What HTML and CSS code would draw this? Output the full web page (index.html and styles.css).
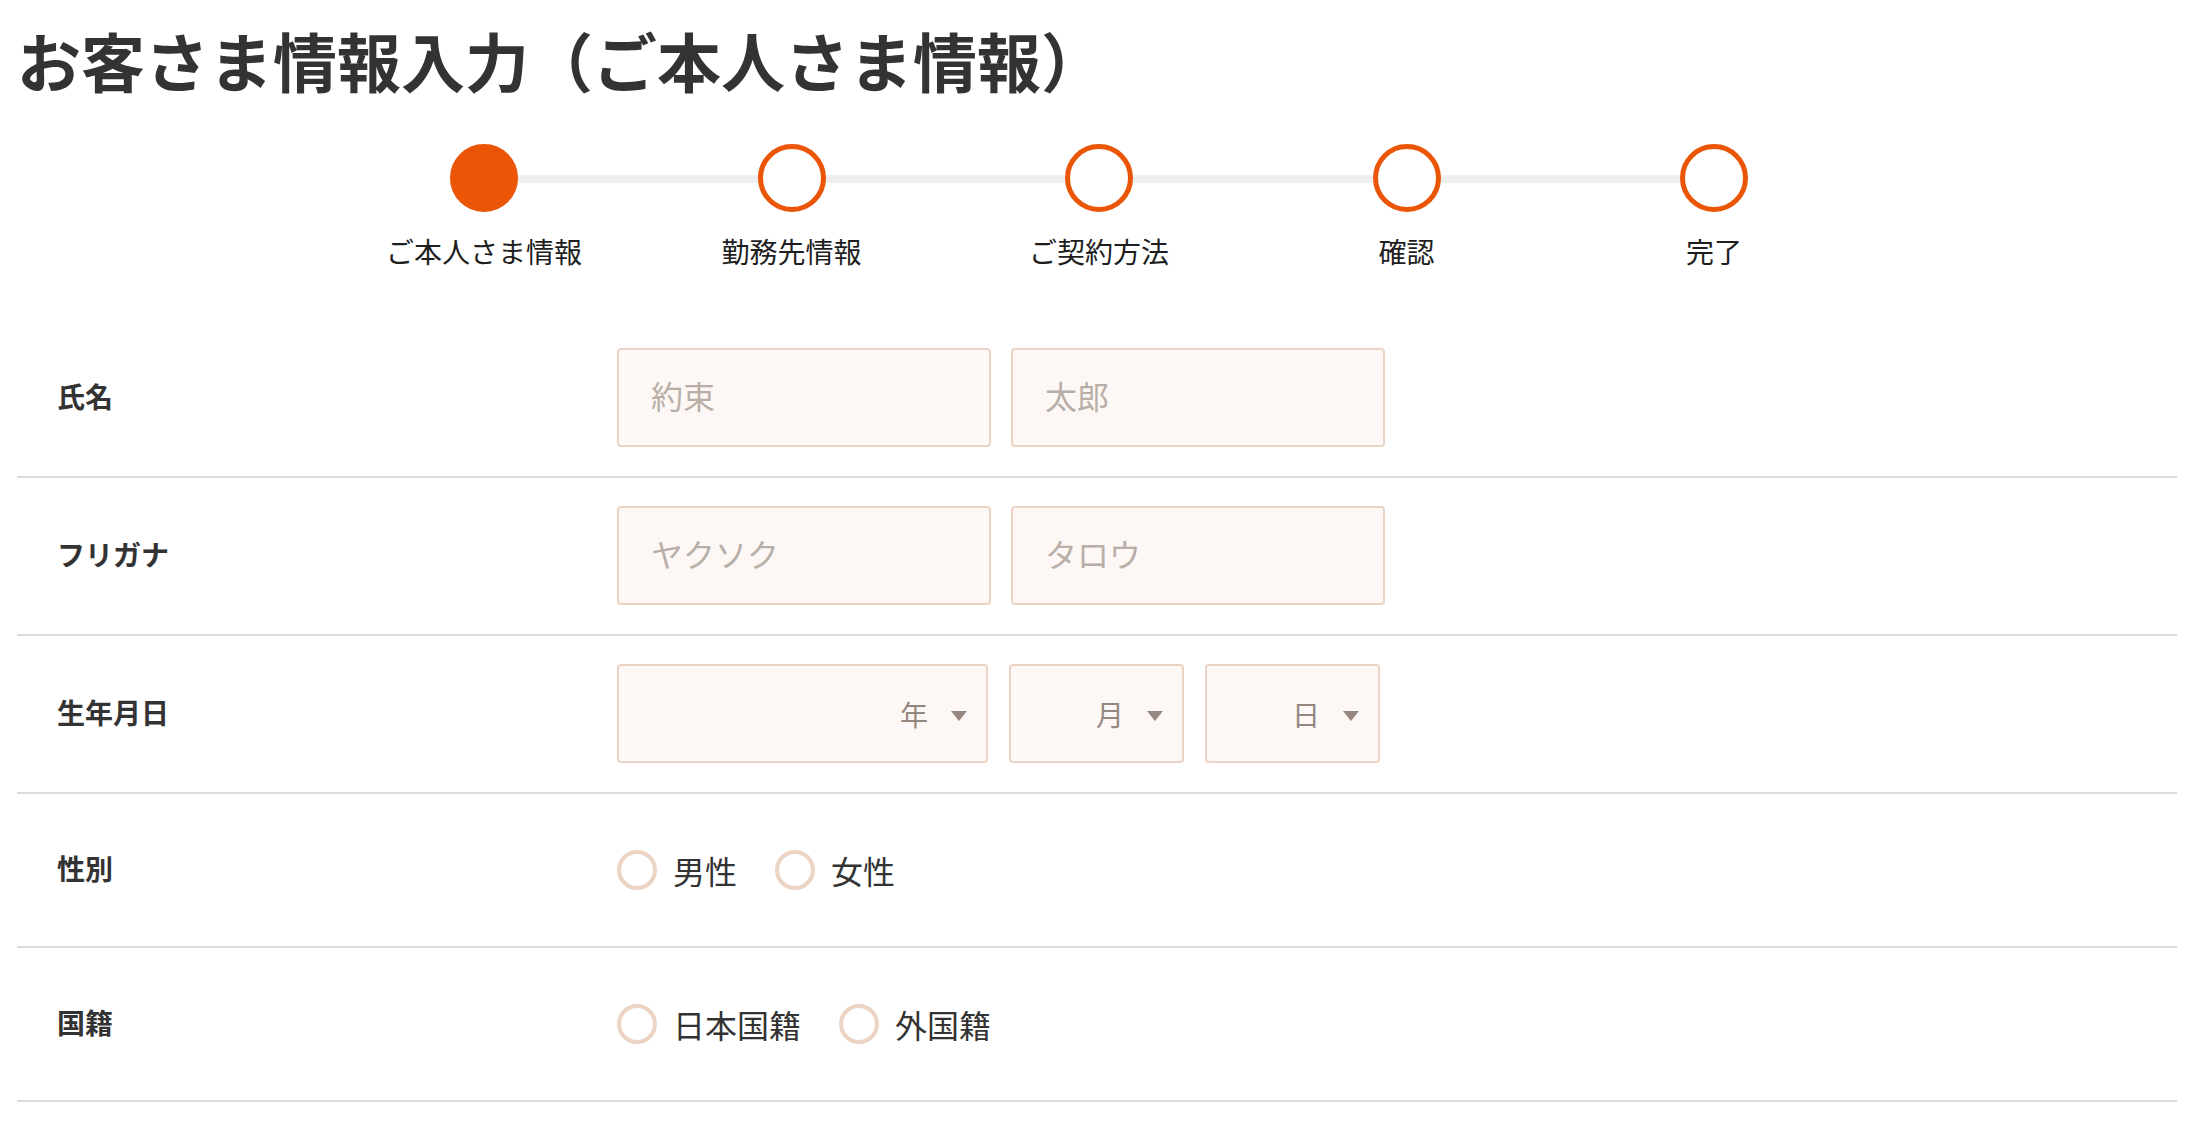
FILE: index.html
```html
<!DOCTYPE html>
<html lang="ja">
<head>
  <meta charset="UTF-8" />
  <meta name="viewport" content="width=device-width, initial-scale=1.0" />
  <title>お客さま情報入力（ご本人さま情報）</title>
  <link rel="stylesheet" href="styles.css">
</head>
<body>
  <h1 class="page-title">お客さま情報入力（ご本人さま情報）</h1>

  <ol class="steps">
    <li class="step is-current"><span class="step-dot"></span><span class="step-label">ご本人さま情報</span></li>
    <li class="step"><span class="step-dot"></span><span class="step-label">勤務先情報</span></li>
    <li class="step"><span class="step-dot"></span><span class="step-label">ご契約方法</span></li>
    <li class="step"><span class="step-dot"></span><span class="step-label">確認</span></li>
    <li class="step"><span class="step-dot"></span><span class="step-label">完了</span></li>
  </ol>

  <form class="entry-form">
    <div class="form-row">
      <div class="row-label">氏名</div>
      <div class="row-field">
        <input type="text" class="text-input" name="last_name" placeholder="約束">
        <input type="text" class="text-input" name="first_name" placeholder="太郎">
      </div>
    </div>

    <div class="form-row">
      <div class="row-label">フリガナ</div>
      <div class="row-field">
        <input type="text" class="text-input" name="last_kana" placeholder="ヤクソク">
        <input type="text" class="text-input" name="first_kana" placeholder="タロウ">
      </div>
    </div>

    <div class="form-row">
      <div class="row-label">生年月日</div>
      <div class="row-field">
        <div class="select-box select-year">
          <select name="birth_year"><option value="">年</option></select>
        </div>
        <div class="select-box select-small">
          <select name="birth_month"><option value="">月</option></select>
        </div>
        <div class="select-box select-small">
          <select name="birth_day"><option value="">日</option></select>
        </div>
      </div>
    </div>

    <div class="form-row">
      <div class="row-label">性別</div>
      <div class="row-field radio-field">
        <label class="radio"><input type="radio" name="gender" value="male"><span>男性</span></label>
        <label class="radio"><input type="radio" name="gender" value="female"><span>女性</span></label>
      </div>
    </div>

    <div class="form-row">
      <div class="row-label">国籍</div>
      <div class="row-field radio-field">
        <label class="radio"><input type="radio" name="nationality" value="jp"><span>日本国籍</span></label>
        <label class="radio"><input type="radio" name="nationality" value="other"><span>外国籍</span></label>
      </div>
    </div>
  </form>
</body>
</html>
```

FILE: styles.css
```css
body {
  margin: 0;
  padding: 0 15px 0 17px;
  font-family: "Noto Sans CJK JP", "Noto Sans", sans-serif;
  color: #333;
  background: #fff;
}
.page-title {
  margin: 11px 0 0;
  font-size: 64px;
  line-height: 96px;
  font-weight: bold;
  color: #333;
}

/* stepper */
.steps {
  display: grid;
  grid-template-columns: repeat(5, 307.5px);
  justify-content: center;
  margin: 37px 0 0;
  padding: 0 0 0 4px;
  list-style: none;
}
.step {
  position: relative;
  display: flex;
  flex-direction: column;
  align-items: center;
}
.step + .step::before {
  content: "";
  position: absolute;
  top: 31px;
  left: -50%;
  width: 100%;
  height: 8px;
  background: #eee;
}
.step-dot {
  position: relative;
  z-index: 1;
  box-sizing: border-box;
  width: 68px;
  height: 68px;
  border: 5px solid #ea5506;
  border-radius: 50%;
  background: #fff;
}
.step.is-current .step-dot {
  background: #ea5506;
}
.step-label {
  margin-top: 19px;
  font-size: 28px;
  line-height: 40px;
  color: #1e1e1e;
  white-space: nowrap;
}

/* form rows */
.entry-form {
  margin-top: 49px;
}
.form-row {
  display: flex;
  align-items: center;
  padding: 28px 0 29px 40px;
  border-bottom: 2px solid #dcdcdc;
}
.row-label {
  width: 560px;
  flex-shrink: 0;
  padding-bottom: 3px;
  font-size: 28px;
  font-weight: bold;
  color: #333;
}
.row-field {
  display: flex;
  align-items: center;
  gap: 20px;
}
.text-input {
  box-sizing: border-box;
  width: 374px;
  height: 99px;
  margin: 0;
  padding: 0 32px 6px;
  border: 2px solid #ecd4c4;
  border-radius: 4px;
  background: #fdf8f5;
  font-family: inherit;
  font-size: 32px;
  color: #333;
  outline: none;
}
.text-input::placeholder {
  color: #b9afa8;
}

/* selects */
.select-box {
  position: relative;
  height: 99px;
}
.select-year {
  width: 371px;
}
.select-small {
  width: 175px;
}
.select-box + .select-box {
  margin-left: 1px;
}
.select-box select {
  box-sizing: border-box;
  width: 100%;
  height: 100%;
  margin: 0;
  padding: 0 58px 0 20px;
  border: 2px solid #ecd4c4;
  border-radius: 4px;
  background: #fdf8f5;
  font-family: inherit;
  font-size: 28px;
  color: #938780;
  text-align-last: right;
  appearance: none;
  -webkit-appearance: none;
  outline: none;
}
.select-box::after {
  content: "";
  position: absolute;
  top: 47px;
  right: 21px;
  border-left: 8px solid transparent;
  border-right: 8px solid transparent;
  border-top: 10px solid #968880;
  pointer-events: none;
}

/* radios */
.radio-field {
  min-height: 95px;
  gap: 38px;
}
.radio {
  display: flex;
  align-items: center;
  gap: 16px;
  font-size: 32px;
  color: #333;
  cursor: pointer;
}
.radio input {
  box-sizing: border-box;
  width: 40px;
  height: 40px;
  margin: 0;
  border: 4px solid #ecd4c4;
  border-radius: 50%;
  background: #fff;
  appearance: none;
  -webkit-appearance: none;
}
.radio input:checked {
  border-color: #ea5506;
  box-shadow: inset 0 0 0 6px #fff;
  background: #ea5506;
}
```
